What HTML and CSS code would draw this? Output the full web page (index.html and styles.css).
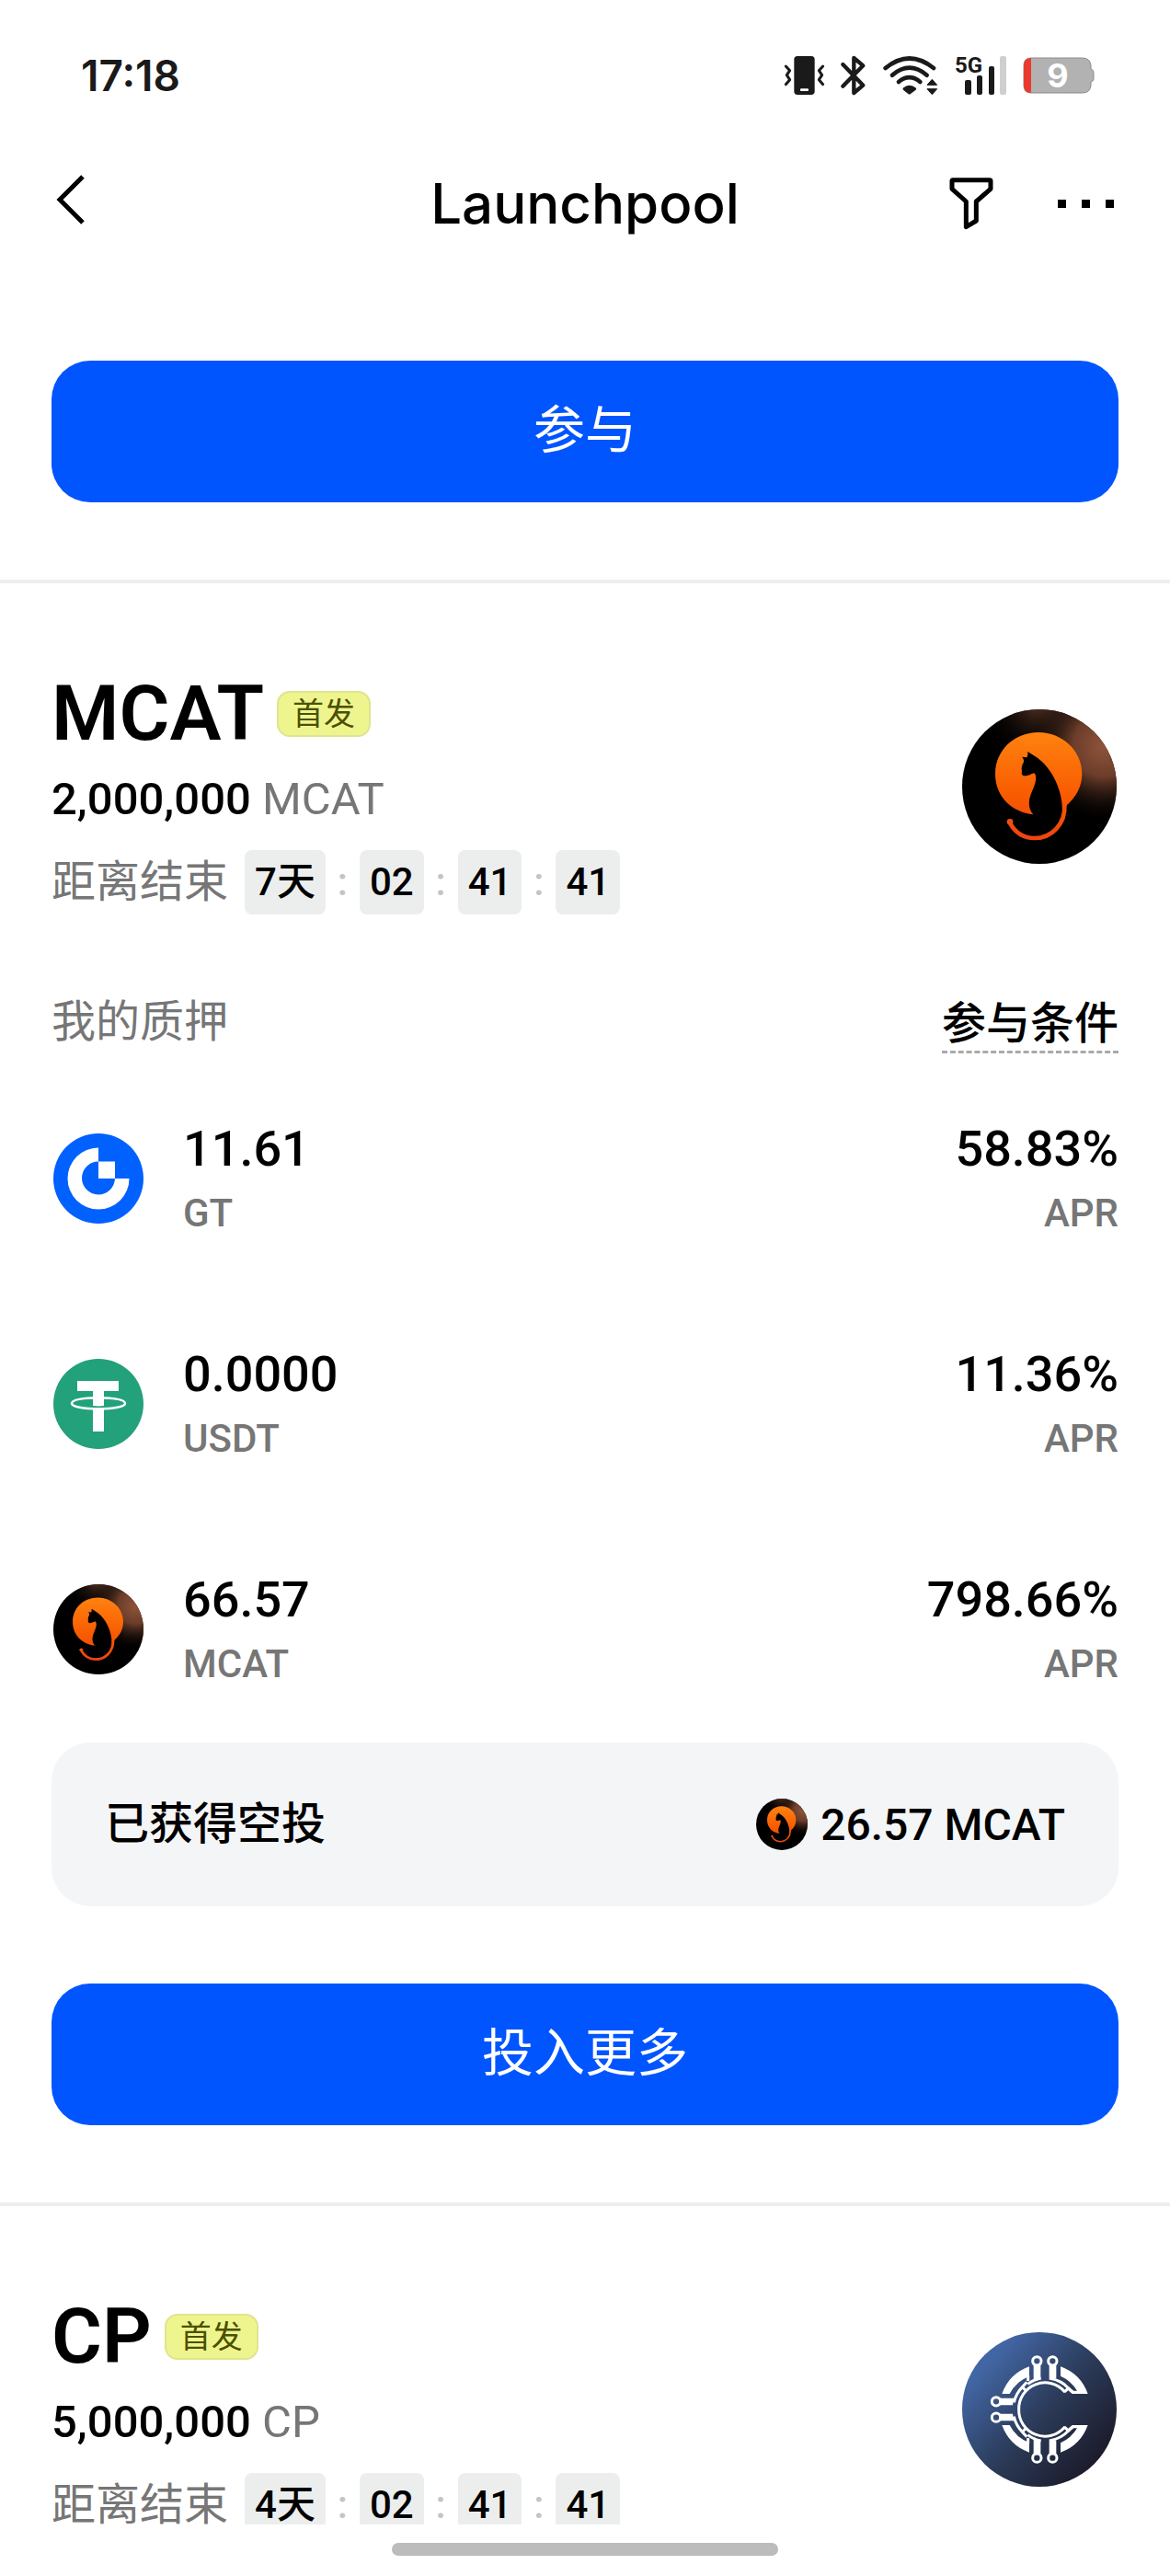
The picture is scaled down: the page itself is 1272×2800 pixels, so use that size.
FILE: index.html
```html
<!DOCTYPE html>
<html lang="zh-CN">
<head>
<meta charset="utf-8">
<meta name="viewport" content="width=device-width, initial-scale=1">
<title>Launchpool</title>
<link rel="stylesheet" href="styles.css">
</head>
<body>
<svg class="defs" width="0" height="0" aria-hidden="true">
  <defs>
    <radialGradient id="cat-glow" gradientUnits="userSpaceOnUse" cx="600" cy="215" r="250">
      <stop offset="0" stop-color="#8f543b"/>
      <stop offset="0.4" stop-color="#6b3d2a"/>
      <stop offset="1" stop-color="#000" stop-opacity="0"/>
    </radialGradient>
    <radialGradient id="cat-top" gradientUnits="userSpaceOnUse" cx="400" cy="60" r="210">
      <stop offset="0" stop-color="#6b402c"/>
      <stop offset="1" stop-color="#000" stop-opacity="0"/>
    </radialGradient>
    <linearGradient id="cat-fire" gradientUnits="userSpaceOnUse" x1="388" y1="170" x2="388" y2="520">
      <stop offset="0" stop-color="#ff8210"/>
      <stop offset="0.6" stop-color="#f85a00"/>
      <stop offset="1" stop-color="#ee4410"/>
    </linearGradient>
    <linearGradient id="cp-bg" gradientUnits="userSpaceOnUse" x1="215" y1="220" x2="570" y2="540">
      <stop offset="0" stop-color="#4265a3"/>
      <stop offset="0.5" stop-color="#2b3b59"/>
      <stop offset="1" stop-color="#1c1b2b"/>
    </linearGradient>
  </defs>
  <symbol id="coin-mcat" viewBox="139 95 504 504">
    <circle cx="391" cy="347" r="252" fill="#000"/>
    <circle cx="391" cy="347" r="252" fill="url(#cat-top)"/>
    <circle cx="391" cy="347" r="252" fill="url(#cat-glow)"/>
    <path fill="url(#cat-fire)" d="M372 438C300 430 247 380 247 305C247 228 310 170 388 170C466 170 530 230 530 305C530 345 512 380 482 406L462 440Z"/>
    <path fill="#000" d="M353 233L373 246C425 276 466 350 466 425C466 475 430 510 378 510C345 510 340 470 371 438C350 415 357 385 368 360C378 338 384 318 376 304C366 302 360 312 345 312C334 312 332 305 334 298C331 285 335 275 340 267C341 259 338 254 334 250L350 252C354 247 353 240 353 233Z"/>
    <path fill="none" stroke="url(#cat-fire)" stroke-width="14" d="M473 405C477 470 430 515 375 515C340 515 312 497 295 466"/>
    <circle cx="295" cy="462" r="10" fill="#ee5012"/>
  </symbol>
</svg>

<header class="topbar">
  <div class="status">
    <time class="clock">17:18</time>
    <div class="status-icons" aria-hidden="true">
      <svg class="vibrate" width="43" height="42" viewBox="0 0 129 126">
        <rect x="31" y="0" width="67" height="126" rx="11" fill="#1a1a1a"/>
        <rect x="51" y="106" width="27" height="8" rx="3" fill="#fff"/>
        <path d="M4 33L17 47L7 62L17 77L4 92M125 33L112 47L122 62L112 77L125 92" fill="none" stroke="#1a1a1a" stroke-width="9" stroke-linecap="round" stroke-linejoin="round"/>
      </svg>
      <svg class="bluetooth" width="28" height="44" viewBox="0 0 84 132">
        <path d="M7 30L73 98L43 123V9L73 34L7 101" fill="none" stroke="#1a1a1a" stroke-width="13" stroke-linecap="round" stroke-linejoin="round"/>
      </svg>
      <svg class="wifi" width="60" height="42" viewBox="0 0 180 126">
        <g fill="none" stroke="#1a1a1a" stroke-width="14" stroke-linecap="round">
          <path d="M8 39Q86 -24 165 39"/>
          <path d="M30 62Q86 14 143 62"/>
          <path d="M51 84Q86 55 121 84"/>
        </g>
        <path d="M65 104Q86 86 108 104Q110 108 106 111L90 123Q86 126 82 123L67 111Q63 108 65 104Z" fill="#1a1a1a"/>
        <path d="M144 94L160 76L176 94ZM144 107H176L160 125Z" fill="#1a1a1a" stroke="#1a1a1a" stroke-width="3" stroke-linejoin="round"/>
      </svg>
      <svg class="signal" width="56" height="44" viewBox="0 0 56 44">
        <text class="net" x="0" y="19">5G</text>
        <rect x="11" y="27" width="7" height="16" rx="2" fill="#1a1a1a"/>
        <rect x="24" y="22" width="6" height="21" rx="2" fill="#1a1a1a"/>
        <rect x="37" y="12" width="6" height="31" rx="2" fill="#1a1a1a"/>
        <rect x="49" y="1" width="7" height="42" rx="2" fill="#cfcfcf"/>
      </svg>
      <svg class="battery" width="78" height="40" viewBox="0 0 78 40">
        <path d="M9 1H65Q73 1 74 9V13Q77 14 77 17V24Q77 26 74 27V31Q73 39 65 39H9Q1 39 1 31V9Q1 1 9 1Z" fill="#b2b2b2" stroke="#8c8c8c"/>
        <path d="M8 1H9V39H8Q1 38 1 31V9Q1 2 8 1Z" fill="#ea3a2e"/>
        <text class="level" x="38" y="33">9</text>
      </svg>
    </div>
  </div>
  <nav class="nav">
    <button class="icon-btn" type="button" aria-label="返回">
      <svg width="34" height="62" viewBox="0 0 34 62"><path d="M30 2L5 27L30 52" fill="none" stroke="#000" stroke-width="5"/></svg>
    </button>
    <h1 class="page-title">Launchpool</h1>
    <div class="nav-actions">
      <button class="icon-btn" type="button" aria-label="筛选">
        <svg width="48" height="56" viewBox="0 0 144 168"><path d="M12 8H132Q135 8 135 11V37L88 78V141L55 161V78L9 37V11Q9 8 12 8Z" fill="none" stroke="#000" stroke-width="15" stroke-linejoin="round"/></svg>
      </button>
      <button class="icon-btn" type="button" aria-label="更多">
        <svg width="62" height="10" viewBox="0 0 62 10"><path d="M0 1H9V10H0ZM26 1H35V10H26ZM52 1H61V10H52Z"/></svg>
      </button>
    </div>
  </nav>
</header>

<main class="feed">
  <section class="pool pool-first">
    <button class="primary" type="button">参与</button>
  </section>

  <section class="pool">
    <div class="pool-head">
      <div class="pool-info">
        <div class="pool-title"><h2>MCAT</h2><span class="chip">首发</span></div>
        <p class="amount">2,000,000 <span>MCAT</span></p>
        <div class="countdown">
          <span class="label">距离结束</span>
          <div class="timer">
            <span class="unit">7天</span><i>:</i><span class="unit">02</span><i>:</i><span class="unit">41</span><i>:</i><span class="unit">41</span>
          </div>
        </div>
      </div>
      <svg class="pool-logo" role="img" aria-label="MCAT"><use href="#coin-mcat"/></svg>
    </div>

    <div class="stake-head">
      <h3>我的质押</h3>
      <a href="#terms">参与条件</a>
    </div>

    <ul class="stakes">
      <li>
        <svg class="coin" viewBox="0 0 98 98" role="img" aria-label="GT">
          <circle cx="49" cy="49" r="49" fill="#0061ff"/>
          <path d="M49 15.500A33.500 33.500 0 1 0 82.500 49H67A18 18 0 1 1 49 30.500Z" fill="#fff"/>
          <path d="M49 30.500H67V49H49Z" fill="#fff"/>
        </svg>
        <div class="stake-text"><strong>11.61</strong><span>GT</span></div>
        <div class="stake-text end"><strong>58.83%</strong><span>APR</span></div>
      </li>
      <li>
        <svg class="coin" viewBox="0 0 98 98" role="img" aria-label="USDT">
          <circle cx="49" cy="49" r="49" fill="#23a17b"/>
          <path d="M26 24H71V35H55V79H43V35H26Z" fill="#fff"/>
          <path d="M43 52Q49 53 55 52" fill="none" stroke="#23a17b" stroke-width="2"/>
          <path d="M43 42.500C29 43 20 45 20 48.500C20 52 33 54.500 49 54.500S78 52 78 48.500C78 45 69 43 55 42.500" fill="none" stroke="#fff" stroke-width="2.500"/>
        </svg>
        <div class="stake-text"><strong>0.0000</strong><span>USDT</span></div>
        <div class="stake-text end"><strong>11.36%</strong><span>APR</span></div>
      </li>
      <li>
        <svg class="coin" role="img" aria-label="MCAT"><use href="#coin-mcat"/></svg>
        <div class="stake-text"><strong>66.57</strong><span>MCAT</span></div>
        <div class="stake-text end"><strong>798.66%</strong><span>APR</span></div>
      </li>
    </ul>

    <div class="airdrop">
      <span class="airdrop-label">已获得空投</span>
      <span class="airdrop-value"><svg class="coin-small" aria-hidden="true"><use href="#coin-mcat"/></svg>26.57 MCAT</span>
    </div>
    <button class="primary" type="button">投入更多</button>
  </section>

  <section class="pool">
    <div class="pool-head">
      <div class="pool-info">
        <div class="pool-title"><h2>CP</h2><span class="chip">首发</span></div>
        <p class="amount">5,000,000 <span>CP</span></p>
        <div class="countdown">
          <span class="label">距离结束</span>
          <div class="timer">
            <span class="unit">4天</span><i>:</i><span class="unit">02</span><i>:</i><span class="unit">41</span><i>:</i><span class="unit">41</span>
          </div>
        </div>
      </div>
      <svg class="pool-logo" viewBox="139 107 504 504" role="img" aria-label="CP">
        <defs>
          <g id="cp-half">
            <path fill="#fff" d="M269 308A148 148 0 0 1 358 219V251A118 118 0 0 0 294 308Z"/>
            <path fill="#fff" d="M460 219A148 148 0 0 1 549 308H498L478 291L485 283L503 298H514A118 118 0 0 0 460 250Z"/>
            <path fill="#fff" d="M372 214H395V258L372 262ZM423 214H446V256L423 262ZM262 322H308L304 345H262Z"/>
            <g fill="none" stroke="#fff" stroke-width="9">
              <path d="M308 336A104 104 0 0 1 336 285L350 270"/>
              <path d="M353 276A101 101 0 0 1 396 257"/>
              <path d="M426 258A104 104 0 0 1 486 290L472 302"/>
              <path d="M333 284L347 297"/>
              <path d="M354 248V266"/>
              <path d="M324 360A85 85 0 0 1 474 302"/>
              <circle cx="383" cy="201" r="14"/>
              <circle cx="434" cy="201" r="14"/>
              <circle cx="250" cy="333" r="14"/>
            </g>
          </g>
        </defs>
        <circle cx="391" cy="359" r="252" fill="url(#cp-bg)"/>
        <use href="#cp-half"/>
        <use href="#cp-half" transform="translate(0 718) scale(1 -1)"/>
      </svg>
    </div>
  </section>
</main>

<footer class="home"><div class="home-bar"></div></footer>
</body>
</html>
```

FILE: styles.css
```css
* {
  box-sizing: border-box;
}

html,
body,
h1,
h2,
h3,
p,
ul {
  margin: 0;
  padding: 0;
}

body {
  display: flex;
  flex-direction: column;
  height: 100vh;
  background: #fff;
  color: #000;
  font-family: Roboto, "Noto Sans CJK SC", sans-serif;
  font-size: 48px;
  font-weight: 500;
}

svg {
  display: block;
  flex: none;
  overflow: visible;
}

button {
  border: 0;
  padding: 0;
  background: none;
  color: inherit;
  font: inherit;
  cursor: pointer;
}

.defs {
  position: absolute;
}

/* Status bar and navigation */
.status {
  display: flex;
  align-items: center;
  justify-content: space-between;
  height: 164px;
  padding: 0 82px 0 88px;
}

.clock {
  color: #1a1a1a;
  font-family: Inter, sans-serif;
  font-size: 46px;
  font-weight: 600;
}

.status-icons {
  display: flex;
  align-items: center;
  gap: 18px;
}

.net {
  fill: #1a1a1a;
  font-family: Roboto, sans-serif;
  font-size: 24px;
  font-weight: 700;
}

.level {
  fill: #fff;
  font-family: Inter, sans-serif;
  font-size: 36px;
  font-weight: 700;
  text-anchor: middle;
}

.nav {
  display: grid;
  grid-template-columns: 1fr auto 1fr;
  align-items: center;
  height: 114px;
  padding: 0 60px;
}

.page-title {
  font-family: Inter, sans-serif;
  font-size: 60px;
  font-weight: 500;
}

.icon-btn {
  justify-self: start;
}

.nav-actions {
  display: flex;
  align-items: center;
  justify-self: end;
  gap: 70px;
}

/* Pool list */
.feed {
  flex: 1;
  min-height: 0;
  overflow-y: auto;
  scrollbar-width: none;
}

.pool {
  padding: 82px 56px 84px;
  border-bottom: 4px solid #eeeeee;
}

.pool-first {
  padding-top: 114px;
}

.primary {
  display: block;
  width: 100%;
  height: 154px;
  padding-bottom: 14px;
  border-radius: 42px;
  background: #0055ff;
  color: #fff;
  font-size: 56px;
  font-weight: 400;
}

.pool-head {
  display: flex;
  align-items: center;
  justify-content: space-between;
}

.pool-title {
  display: flex;
  align-items: center;
  gap: 14px;
}

.pool-title h2 {
  font-size: 84px;
  font-weight: 600;
  line-height: 120px;
}

.chip {
  padding: 0 15px;
  border: 2px solid #dfe58c;
  border-radius: 14px;
  background: #eef58f;
  color: #4c5000;
  font-size: 34px;
  font-weight: 400;
  line-height: 46px;
}

.amount {
  font-size: 49px;
  line-height: 66px;
}

.amount span,
.label,
.stake-head h3 {
  color: #767676;
  font-weight: 400;
}

.label,
.airdrop-label {
  line-height: 60px;
}

.countdown {
  display: flex;
  align-items: center;
  gap: 18px;
  margin-top: 22px;
}

.timer {
  display: flex;
  align-items: center;
  font-size: 42px;
  line-height: 70px;
}

.unit {
  padding: 0 11px;
  border-radius: 8px;
  background: #eceeed;
}

.timer i {
  width: 37px;
  color: #c4c4c4;
  font-style: normal;
  text-align: center;
}

.pool-logo {
  width: 168px;
  height: 168px;
  margin-right: 2px;
}

.stake-head {
  display: flex;
  align-items: flex-start;
  justify-content: space-between;
  margin-top: 90px;
}

.stake-head h3 {
  font-size: 48px;
  line-height: 54px;
}

.stake-head a {
  border-bottom: 3px dashed #aaaaaa;
  color: #000;
  line-height: 58px;
  text-decoration: none;
}

.stakes {
  display: flex;
  flex-direction: column;
  gap: 119px;
  margin-top: 73px;
  list-style: none;
}

.stakes li {
  display: flex;
  align-items: center;
}

.coin {
  width: 98px;
  height: 98px;
  margin: 0 43px 0 2px;
}

.stake-text {
  display: flex;
  flex-direction: column;
  gap: 14px;
}

.stake-text.end {
  margin-left: auto;
  text-align: right;
}

.stake-text strong {
  font-size: 54px;
  font-weight: 500;
  line-height: 62px;
}

.stake-text span {
  color: #767676;
  font-size: 42px;
  line-height: 50px;
}

.airdrop {
  display: flex;
  align-items: center;
  justify-content: space-between;
  min-height: 178px;
  margin: 60px 0 84px;
  padding: 0 58px;
  border-radius: 42px;
  background: #f4f5f7;
}

.airdrop-value {
  display: flex;
  align-items: center;
  gap: 14px;
}

.coin-small {
  width: 56px;
  height: 56px;
}

/* Home indicator */
.home {
  display: flex;
  justify-content: center;
  padding: 20px 0 22px;
}

.home-bar {
  width: 33%;
  height: 14px;
  border-radius: 7px;
  background: #bcbcbc;
}
```
